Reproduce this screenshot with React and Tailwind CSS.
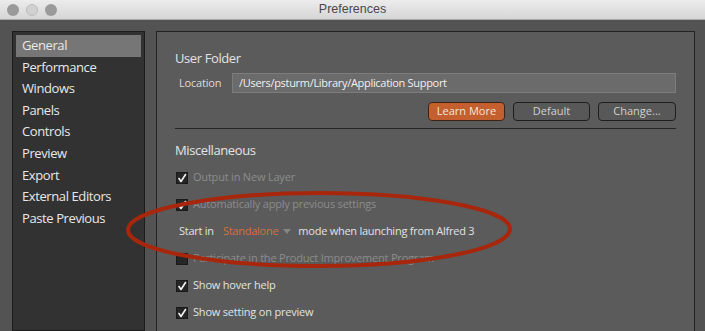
import React from 'react';

const sections = [
  'General',
  'Performance',
  'Windows',
  'Panels',
  'Controls',
  'Preview',
  'Export',
  'External Editors',
  'Paste Previous',
];

function Check({ checked }) {
  return (
    <span className="w-[12px] h-[12px] bg-[#262626] border border-[#1a1a1a] flex items-center justify-center shrink-0">
      {checked && (
        <svg width="10" height="10" viewBox="0 0 10 10">
          <path d="M2 5.5 L4 8.5 L8.5 1.5" fill="none" stroke="#f2f2f2" strokeWidth="1.6" strokeLinecap="round" strokeLinejoin="round" />
        </svg>
      )}
    </span>
  );
}

function CheckRow({ checked, disabled, label }) {
  return (
    <div className="h-[27px] flex items-center gap-[5px] pl-[1px]">
      <Check checked={checked} />
      <span className={`text-[11px] tracking-[-0.2px] ${disabled ? 'text-[#8c8c8c]' : 'text-[#e2e2e2]'}`}>{label}</span>
    </div>
  );
}

export default function App() {
  return (
    <div className="relative w-[705px] h-[331px] overflow-hidden bg-[#535353]" style={{ fontFamily: '"Open Sans", "Liberation Sans", sans-serif' }}>
      {/* title bar */}
      <div className="relative h-[20px] bg-gradient-to-b from-[#ececec] to-[#d6d6d6] border-b border-[#a9a9a9] flex items-center justify-center">
        <div className="absolute left-[7px] top-[4px] flex gap-[7px]">
          <span className="w-[12px] h-[12px] rounded-full bg-[#9a9a9a]" />
          <span className="w-[12px] h-[12px] rounded-full bg-[#d0d0d0] border border-[#bdbdbd]" />
          <span className="w-[12px] h-[12px] rounded-full bg-[#9a9a9a]" />
        </div>
        <span className="text-[12.5px] text-[#4a4a4a]" style={{ fontFamily: '"Liberation Sans", sans-serif' }}>Preferences</span>
      </div>

      <div className="flex gap-[11px] pl-[12px] pr-[10px] pt-[11px] h-[311px]">
        {/* sidebar */}
        <div className="w-[133px] bg-[#323232] border border-[#1c1c1c] pt-[3px] px-[3px]">
          {sections.map((s, i) => (
            <div
              key={s}
              className={`h-[21.6px] flex items-center pl-[6px] text-[13px] tracking-[-0.4px] text-[#e8e8e8] ${i === 0 ? 'bg-[#767676]' : ''}`}
            >
              {s}
            </div>
          ))}
        </div>

        {/* main panel */}
        <div className="flex-1 bg-[#5b5b5b] border border-[#232323] border-b-0 pl-[18px] pr-[18px] pt-[16px]">
          <div className="text-[13px] tracking-[-0.4px] text-[#e4e4e4] leading-[20px]">User Folder</div>
          <div className="flex items-center mt-[5px] h-[20px]">
            <span className="w-[57px] pl-[4px] text-[11px] tracking-[-0.2px] text-[#dcdcdc]">Location</span>
            <div className="flex-1 h-[20px] bg-[#6b6b6b] border border-[#7c7c7c] flex items-center pl-[6px] text-[11px] tracking-[-0.3px] text-[#f0f0f0]">
              /Users/psturm/Library/Application Support
            </div>
          </div>
          <div className="flex justify-end gap-[8px] mt-[9px]">
            <button className="w-[77px] h-[19px] rounded-[4px] bg-[#c4602f] border border-[#3a2418] text-[11px] text-[#f6e4da]">Learn More</button>
            <button className="w-[77px] h-[19px] rounded-[4px] bg-[#585858] border border-[#1e1e1e] text-[11px] text-[#d0d0d0]">Default</button>
            <button className="w-[78px] h-[19px] rounded-[4px] bg-[#585858] border border-[#1e1e1e] text-[11px] text-[#d0d0d0]">Change...</button>
          </div>
          <div className="h-[1px] bg-[#262626] mt-[7px]" />

          <div className="text-[13px] tracking-[-0.4px] text-[#e4e4e4] leading-[20px] mt-[11px]">Miscellaneous</div>
          <div className="mt-[4px]">
            <CheckRow checked disabled label="Output in New Layer" />
            <CheckRow checked disabled label="Automatically apply previous settings" />
            <div className="h-[27px] flex items-center text-[11px] tracking-[-0.25px] text-[#e2e2e2] pl-[4px]">
              <span>Start in</span>
              <span className="ml-[9px] text-[#d5703d]">Standalone</span>
              <svg className="ml-[5px]" width="8" height="5" viewBox="0 0 8 5">
                <path d="M0 0 L8 0 L4 5 Z" fill="#858585" />
              </svg>
              <span className="ml-[7px]">mode when launching from Alfred 3</span>
            </div>
            <CheckRow disabled label="Participate in the Product Improvement Program" />
            <CheckRow checked label="Show hover help" />
            <CheckRow checked label="Show setting on preview" />
          </div>
        </div>
      </div>

      {/* hand-drawn annotation */}
      <svg className="absolute inset-0 pointer-events-none" width="705" height="331" viewBox="0 0 705 331">
        <path
          d="M128 230 C128 210 214 193 319 193 C424 193 510 209 510 229 C510 249 424 266 319 266 C214 266 128 250 128 230 Z"
          fill="none"
          stroke="#a8270c"
          strokeWidth="4"
        />
      </svg>
    </div>
  );
}
